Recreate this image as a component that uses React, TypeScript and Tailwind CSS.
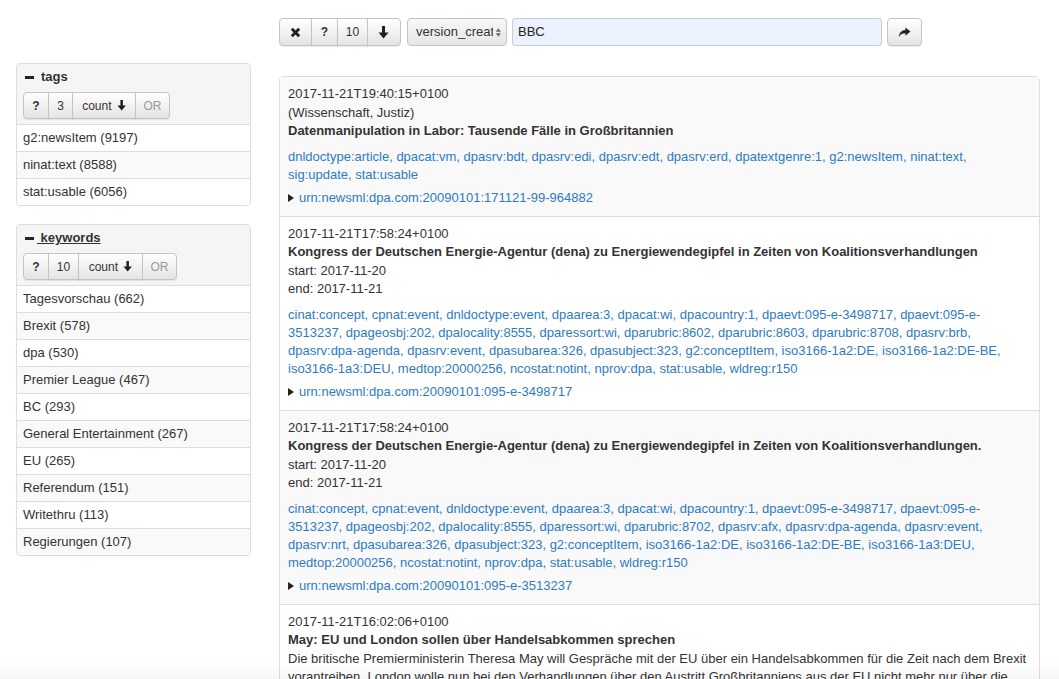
import type { ReactNode } from 'react';

const font = { fontFamily: '"Liberation Sans", Arial, Helvetica, sans-serif' };

type Result = {
  date: string;
  sub?: string;
  title: string;
  start?: string;
  end?: string;
  tags?: string[];
  urn?: string;
  text?: string[];
};

const results: Result[] = [
  {
    date: '2017-11-21T19:40:15+0100',
    sub: '(Wissenschaft, Justiz)',
    title: 'Datenmanipulation in Labor: Tausende Fälle in Großbritannien',
    tags: [
      'dnldoctype:article, dpacat:vm, dpasrv:bdt, dpasrv:edi, dpasrv:edt, dpasrv:erd, dpatextgenre:1, g2:newsItem, ninat:text,',
      'sig:update, stat:usable',
    ],
    urn: 'urn:newsml:dpa.com:20090101:171121-99-964882',
  },
  {
    date: '2017-11-21T17:58:24+0100',
    title:
      'Kongress der Deutschen Energie-Agentur (dena) zu Energiewendegipfel in Zeiten von Koalitionsverhandlungen',
    start: '2017-11-20',
    end: '2017-11-21',
    tags: [
      'cinat:concept, cpnat:event, dnldoctype:event, dpaarea:3, dpacat:wi, dpacountry:1, dpaevt:095-e-3498717, dpaevt:095-e-',
      '3513237, dpageosbj:202, dpalocality:8555, dparessort:wi, dparubric:8602, dparubric:8603, dparubric:8708, dpasrv:brb,',
      'dpasrv:dpa-agenda, dpasrv:event, dpasubarea:326, dpasubject:323, g2:conceptItem, iso3166-1a2:DE, iso3166-1a2:DE-BE,',
      'iso3166-1a3:DEU, medtop:20000256, ncostat:notint, nprov:dpa, stat:usable, wldreg:r150',
    ],
    urn: 'urn:newsml:dpa.com:20090101:095-e-3498717',
  },
  {
    date: '2017-11-21T17:58:24+0100',
    title:
      'Kongress der Deutschen Energie-Agentur (dena) zu Energiewendegipfel in Zeiten von Koalitionsverhandlungen.',
    start: '2017-11-20',
    end: '2017-11-21',
    tags: [
      'cinat:concept, cpnat:event, dnldoctype:event, dpaarea:3, dpacat:wi, dpacountry:1, dpaevt:095-e-3498717, dpaevt:095-e-',
      '3513237, dpageosbj:202, dpalocality:8555, dparessort:wi, dparubric:8702, dpasrv:afx, dpasrv:dpa-agenda, dpasrv:event,',
      'dpasrv:nrt, dpasubarea:326, dpasubject:323, g2:conceptItem, iso3166-1a2:DE, iso3166-1a2:DE-BE, iso3166-1a3:DEU,',
      'medtop:20000256, ncostat:notint, nprov:dpa, stat:usable, wldreg:r150',
    ],
    urn: 'urn:newsml:dpa.com:20090101:095-e-3513237',
  },
  {
    date: '2017-11-21T16:02:06+0100',
    title: 'May: EU und London sollen über Handelsabkommen sprechen',
    text: [
      'Die britische Premierministerin Theresa May will Gespräche mit der EU über ein Handelsabkommen für die Zeit nach dem Brexit',
      'vorantreiben. London wolle nun bei den Verhandlungen über den Austritt Großbritanniens aus der EU nicht mehr nur über die',
      'Bedingungen der Scheidung sprechen, sondern auch über die künftigen Beziehungen.',
    ],
  },
];

const tagRows = ['g2:newsItem (9197)', 'ninat:text (8588)', 'stat:usable (6056)'];
const keywordRows = [
  'Tagesvorschau (662)',
  'Brexit (578)',
  'dpa (530)',
  'Premier League (467)',
  'BC (293)',
  'General Entertainment (267)',
  'EU (265)',
  'Referendum (151)',
  'Writethru (113)',
  'Regierungen (107)',
];

function RemoveIcon() {
  return (
    <svg width="11" height="11" viewBox="0 0 12 12">
      <path d="M2 2 L10 10 M10 2 L2 10" stroke="#222" strokeWidth="3.2" />
    </svg>
  );
}

function ArrowDown({ size = 12 }: { size?: number }) {
  return (
    <svg width={size * 0.85} height={size} viewBox="0 0 11 13">
      <path d="M4 0 H7 V6.5 H10.5 L5.5 12.5 L0.5 6.5 H4 Z" fill="#222" />
    </svg>
  );
}

function ShareIcon() {
  return (
    <svg width="13" height="11" viewBox="0 0 14 12">
      <path d="M8 0.5 L13.5 5 L8 9.5 V6.8 C4.8 6.8 2.6 7.8 0.8 10.8 C1.3 6.4 3.8 3.6 8 3.4 Z" fill="#222" />
    </svg>
  );
}

function Btn({ children, className = '' }: { children: ReactNode; className?: string }) {
  return (
    <div
      className={`flex items-center justify-center border border-[#c4c4c4] -ml-px first:ml-0 first:rounded-l-[4px] last:rounded-r-[4px] bg-gradient-to-b from-white to-[#e4e4e4] shadow-[0_1px_1px_rgba(0,0,0,0.07)] text-[12px] text-[#333] ${className}`}
    >
      {children}
    </div>
  );
}

function Facet({ title, link, n, rows }: { title: string; link?: boolean; n: string; rows: string[] }) {
  return (
    <div className="border border-[#ddd] rounded-[4px] mb-[18px] overflow-hidden">
      <div className="bg-[#f5f5f5] px-[6px] pt-[4px] pb-[5px]">
        <div className="flex items-center h-[18px] text-[13px] font-bold text-[#333]">
          <span className="inline-block w-[9px] h-[3px] bg-[#222] ml-[2px] mr-[7px]" />
          {link ? <span className="underline -ml-[4px]">{'\u00a0' + title}</span> : <span>{title}</span>}
        </div>
        <div className="flex mt-[6px] h-[27px]">
          <Btn className="w-[26px] font-bold">?</Btn>
          <Btn className={n === '3' ? 'w-[25px]' : 'w-[31px]'}>{n}</Btn>
          <Btn className={`${n === '3' ? 'w-[64px]' : 'w-[65px]'} gap-[5px]`}>
            count <ArrowDown size={11} />
          </Btn>
          <Btn className="w-[35px] text-[#999]">OR</Btn>
        </div>
      </div>
      {rows.map((r, i) => (
        <div
          key={r}
          className={`border-t border-[#ddd] px-[6px] py-[4px] text-[13px] leading-[18px] text-[#333] ${
            i % 2 === 1 ? 'bg-[#f9f9f9]' : 'bg-white'
          }`}
        >
          {r}
        </div>
      ))}
    </div>
  );
}

export default function App() {
  return (
    <div className="min-h-screen bg-white text-[#333]" style={font}>
      <div className="flex pl-[16px]">
        {/* Sidebar */}
        <aside className="w-[235px] shrink-0 pt-[63px]">
          <Facet title="tags" n="3" rows={tagRows} />
          <Facet title="keywords" link n="10" rows={keywordRows} />
        </aside>

        {/* Main */}
        <main className="ml-[28px] w-[761px] pt-[18px]">
          <div className="flex items-center h-[28px]">
            <div className="flex h-[28px]">
              <Btn className="w-[33px]">
                <RemoveIcon />
              </Btn>
              <Btn className="w-[27px] font-bold">?</Btn>
              <Btn className="w-[31px]">10</Btn>
              <Btn className="w-[34px]">
                <ArrowDown size={13} />
              </Btn>
            </div>
            <div className="ml-[6px] flex items-center h-[28px] w-[100px] rounded-[4px] border border-[#c4c4c4] bg-gradient-to-b from-[#f7f7f7] to-[#e6e6e6] pl-[8px] pr-[4px] text-[13px]">
              <span className="overflow-hidden whitespace-nowrap w-[80px]">version_created</span>
              <svg width="7" height="11" viewBox="0 0 8 12" className="ml-[2px]">
                <path d="M1 5 H7 L4 1 Z M1 7 H7 L4 11 Z" fill="#666" />
              </svg>
            </div>
            <div className="ml-[5px] flex items-center h-[28px] w-[370px] rounded-[3px] border border-[#c5cdd8] bg-[#ebf2fd] px-[5px] text-[13px] text-[#222]">
              BBC
            </div>
            <div className="ml-[5px] flex h-[28px]">
              <Btn className="w-[35px]">
                <ShareIcon />
              </Btn>
            </div>
          </div>

          <div className="mt-[30px] border border-[#ddd] rounded-t-[4px] text-[13px]">
            {results.map((r, i) => (
              <div
                key={i}
                className={`px-[8px] pt-[8px] pb-[9px] ${i > 0 ? 'border-t border-[#ddd]' : ''} ${
                  i % 2 === 0 ? 'bg-[#f9f9f9]' : 'bg-white'
                }`}
              >
                <div className="leading-[18.5px]">
                  <div>{r.date}</div>
                  {r.sub && <div>{r.sub}</div>}
                  <div className="font-bold">{r.title}</div>
                  {r.start && <div>start: {r.start}</div>}
                  {r.end && <div>end: {r.end}</div>}
                  {r.text && r.text.map((t) => <div key={t}>{t}</div>)}
                </div>
                {r.tags && (
                  <div className="mt-[7px] leading-[18px] text-[#2f7bc0] whitespace-nowrap">
                    {r.tags.map((t) => (
                      <div key={t}>{t}</div>
                    ))}
                  </div>
                )}
                {r.urn && (
                  <div className="mt-[5px] flex items-center leading-[18px]">
                    <svg width="6" height="8" viewBox="0 0 6 8" className="mr-[5px]">
                      <path d="M0 0 L6 4 L0 8 Z" fill="#222" />
                    </svg>
                    <span className="text-[#2f7bc0]">{r.urn}</span>
                  </div>
                )}
              </div>
            ))}
          </div>
        </main>
      </div>
      <div className="pointer-events-none fixed bottom-0 left-0 right-0 h-[18px] bg-gradient-to-b from-transparent to-black/[0.035]" />
    </div>
  );
}
